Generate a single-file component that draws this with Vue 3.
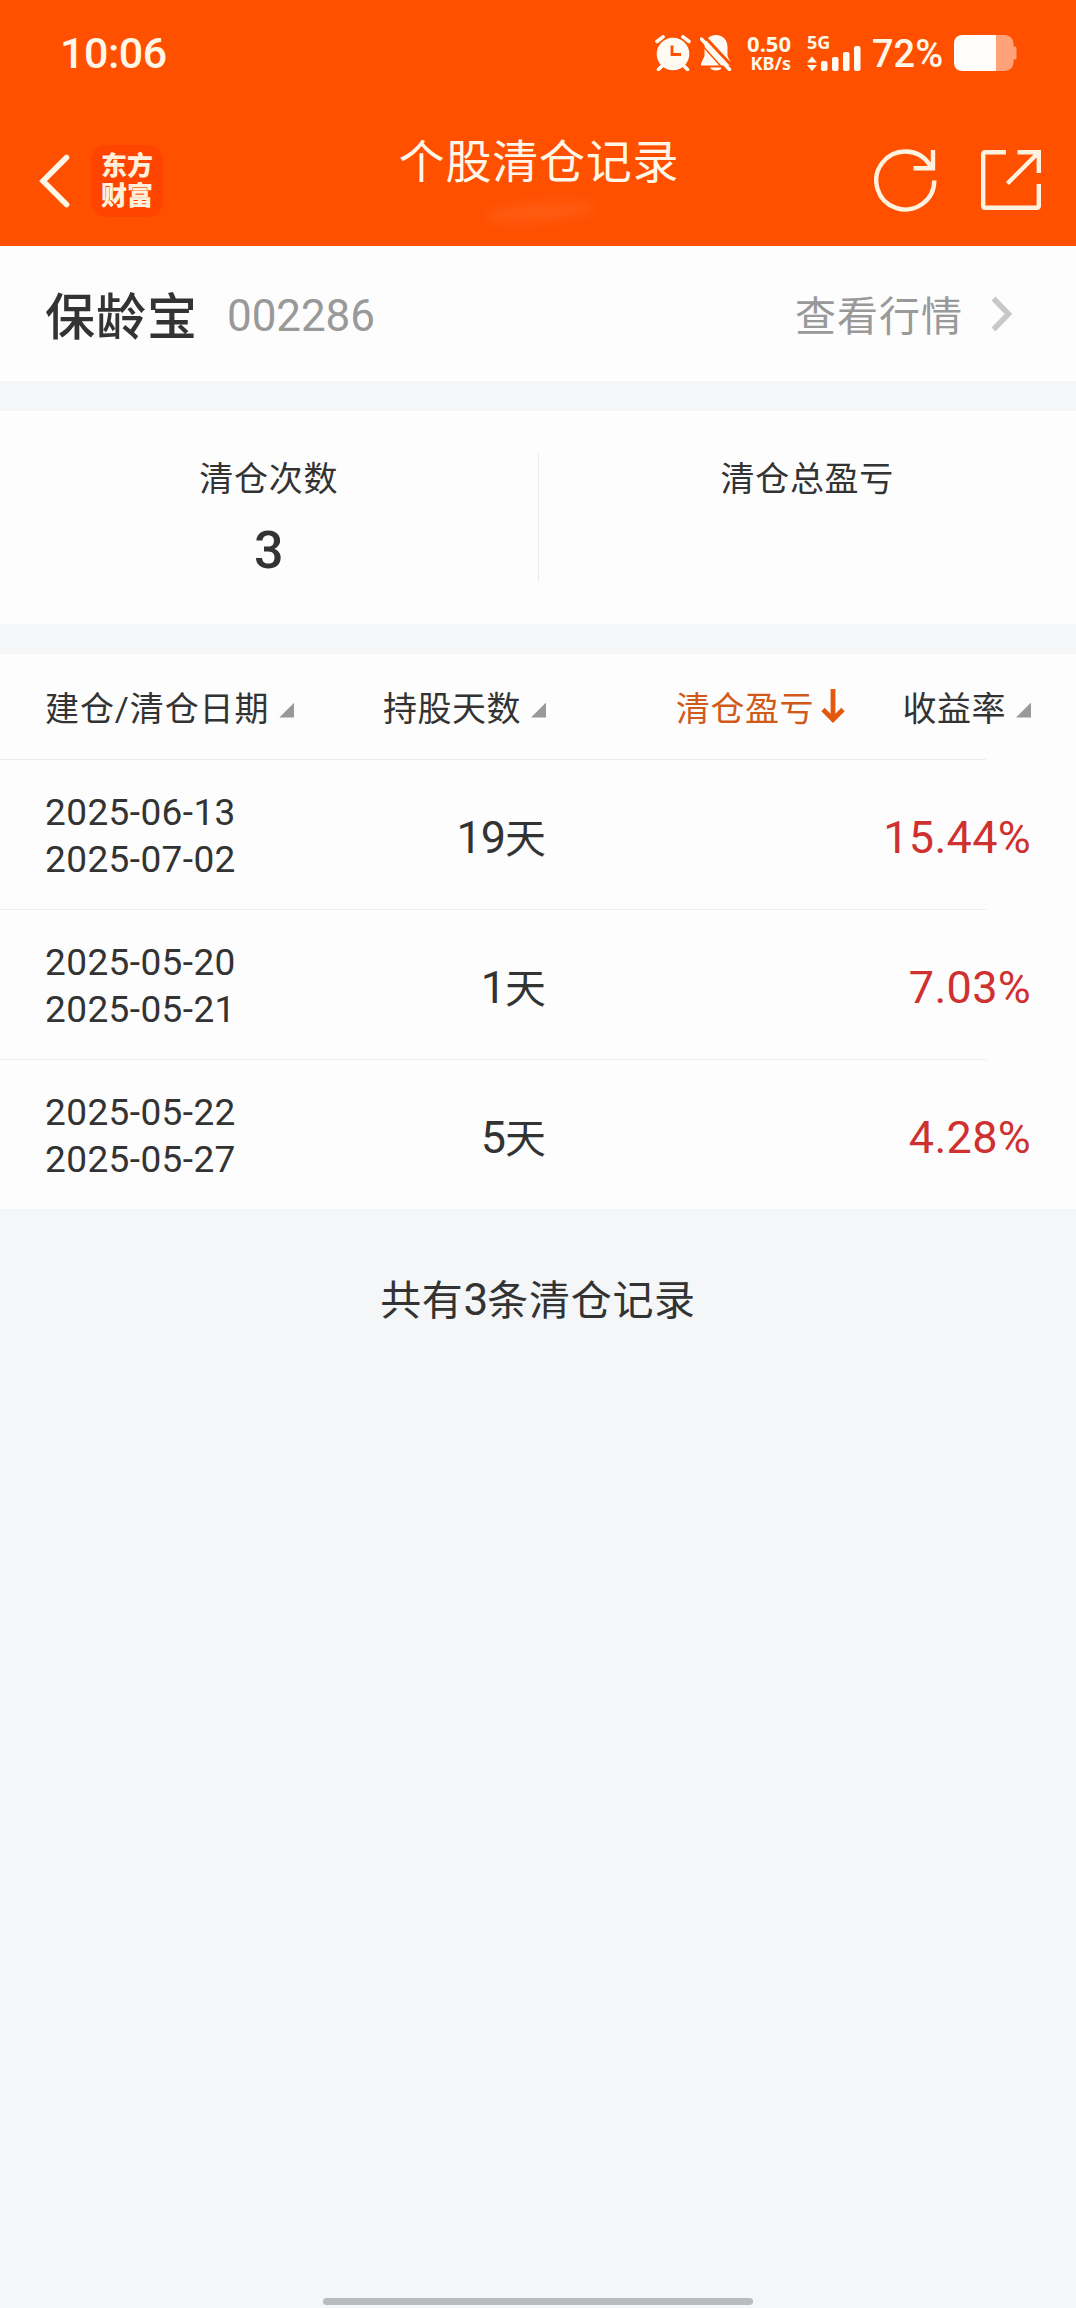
<template>
  <div class="page">
    <!-- 顶部状态栏 + 导航栏 -->
    <header class="top">
      <div class="status-bar">
        <span class="time">10:06</span>
        <div class="status-icons">
          <svg class="alarm" width="36" height="36" viewBox="0 0 36 36">
            <circle cx="18" cy="19" r="16.3" fill="#fffaf2" />
            <path d="M2 6.5 8 1.8M34 6.5 28 1.8M8 30 3.5 34.5M28 30 32.5 34.5" stroke="#fffaf2" stroke-width="3.6" stroke-linecap="round" />
            <path d="M17 10.5V19.5H26" fill="none" stroke="#ff5000" stroke-width="2.8" />
          </svg>
          <svg class="bell" width="32" height="36" viewBox="0 0 32 36">
            <path d="M16 0C9 0 4.5 5 4.5 12V21L1 28.500V30.500H31V28.500L27.500 21V12C27.500 5 23 0 16 0Z" fill="#fffaf2" />
            <path d="M10 32.500H22C20.500 36.500 11.500 36.500 10 32.500Z" fill="#fffaf2" />
            <path d="M4 1 33 32" stroke="#ff5000" stroke-width="3" />
            <path d="M0 8 26 37" stroke="#ff5000" stroke-width="1.5" />
            <path d="M1.500 4 29.500 34.500" stroke="#fffaf2" stroke-width="3.400" stroke-linecap="round" />
          </svg>
          <div class="speed">
            <span class="speed-num">0.50</span>
            <span class="speed-unit">KB/s</span>
          </div>
          <div class="signal">
            <span class="net">5G</span>
            <svg width="54" height="26" viewBox="0 0 54 26">
              <path d="M0 17.500 5 11.500 10 17.500ZM0 20 5 26 10 20Z" fill="#fffaf2" />
              <rect x="14" y="16" width="6.5" height="10" rx="2" fill="#fffaf2" />
              <rect x="25" y="12" width="6.5" height="14" rx="2" fill="#fffaf2" />
              <rect x="36" y="7" width="6.5" height="19" rx="2" fill="#fffaf2" />
              <rect x="47" y="1" width="6.5" height="25" rx="2" fill="#fffaf2" />
            </svg>
          </div>
          <span class="percent">72%</span>
          <svg class="battery" width="63" height="36" viewBox="0 0 63 36">
            <path d="M42 0H50C56 0 59.500 3.500 59.500 9V11.500H61Q62.500 11.500 62.500 13V23Q62.500 24.500 61 24.500H59.500V27C59.500 32.500 56 36 50 36H42Z" fill="#ffa27a" />
            <path d="M9 0H42V36H9C3 36 0 33 0 27V9C0 3 3 0 9 0Z" fill="#fffefd" />
          </svg>
        </div>
      </div>

      <div class="nav-bar">
        <div class="nav-left">
          <svg class="back" width="31" height="54" viewBox="0 0 31 54">
            <path d="M27.500 3.500 4 27 27.500 50.500" fill="none" stroke="#fff7e8" stroke-width="5.600" stroke-linecap="round" />
          </svg>
          <div class="logo">
            <span>东方</span>
            <span>财富</span>
          </div>
        </div>
        <div class="title-box">
          <h1 class="title">个股清仓记录</h1>
          <i class="smudge"></i>
        </div>
        <div class="nav-right">
          <svg width="64" height="64" viewBox="0 0 64 64">
            <path d="M60.300 32.500A29 29 0 1 1 55.500 16.500L58 20" fill="none" stroke="#fff2e0" stroke-width="4.400" />
            <path d="M39.500 20.300H59V2" fill="none" stroke="#fff2e0" stroke-width="4.400" />
          </svg>
          <svg width="62" height="62" viewBox="0 0 62 62">
            <path d="M26 3.200H5.500Q3.200 3.200 3.200 5.500V56.500Q3.200 58.800 5.500 58.800H56.500Q58.800 58.800 58.800 56.500V35M37.500 3.200H58.800V24M58 4 27.500 34.500" fill="none" stroke="#fff2e0" stroke-width="4.400" />
          </svg>
        </div>
      </div>
    </header>

    <!-- 股票信息 -->
    <section class="stock">
      <span class="stock-name">保龄宝</span>
      <span class="stock-code">002286</span>
      <span class="stock-link">查看行情</span>
      <svg width="22" height="36" viewBox="0 0 22 36">
        <path d="M2.500 2.500 17.500 18 2.500 33.500" fill="none" stroke="#c8c8c8" stroke-width="5.400" />
      </svg>
    </section>

    <!-- 汇总 -->
    <section class="summary">
      <div class="summary-item">
        <span class="summary-label">清仓次数</span>
        <span class="summary-value">{{ records.length }}</span>
      </div>
      <div class="summary-item">
        <span class="summary-label">清仓总盈亏</span>
        <span class="summary-value"></span>
      </div>
    </section>

    <!-- 清仓记录列表 -->
    <section class="table">
      <div class="row head">
        <div class="col-date">建仓/清仓日期<i class="tri"></i></div>
        <div class="col-days">持股天数<i class="tri"></i></div>
        <div class="col-profit active">
          清仓盈亏
          <svg width="24" height="34" viewBox="0 0 24 34">
            <path d="M12 0V29M2 20.500 12 30.500 22 20.500" fill="none" stroke="#e2580f" stroke-width="4.800" />
          </svg>
        </div>
        <div class="col-rate">收益率<i class="tri"></i></div>
      </div>
      <div v-for="item in records" :key="item.open" class="row">
        <div class="col-date dates">
          <span>{{ item.open }}</span>
          <span>{{ item.close }}</span>
        </div>
        <div class="col-days days"><span class="num">{{ item.days }}</span>天</div>
        <div class="col-profit"></div>
        <div class="col-rate rate">{{ item.rate }}</div>
      </div>
    </section>

    <p class="total">共有<span class="num">{{ records.length }}</span>条清仓记录</p>

    <div class="home-bar"></div>
  </div>
</template>

<script setup>
import { ref } from 'vue'

const records = ref([
  { open: '2025-06-13', close: '2025-07-02', days: 19, rate: '15.44%' },
  { open: '2025-05-20', close: '2025-05-21', days: 1, rate: '7.03%' },
  { open: '2025-05-22', close: '2025-05-27', days: 5, rate: '4.28%' }
])
</script>

<style>
body {
  margin: 0;
  background: #f4f6f8;
}
</style>

<style scoped>
.page {
  display: flex;
  flex-direction: column;
  width: 1076px;
  height: 2308px;
  overflow: hidden;
  background: #f4f6f8;
  color: #333;
  font-family: Roboto, "Noto Sans CJK SC", sans-serif;
}

.page * {
  box-sizing: border-box;
}

.page svg {
  display: block;
  flex: none;
}

/* 顶部 */
.top {
  height: 246px;
  background: #ff5000;
  color: #fff7e8;
}

.status-bar {
  display: flex;
  justify-content: space-between;
  height: 106px;
  padding: 0 59px 0 60px;
  align-items: center;
}

.time {
  font-size: 43px;
  font-weight: 500;
  line-height: 50px;
  letter-spacing: -0.5px;
}

.status-icons {
  display: flex;
  align-items: center;
}

.bell {
  margin-left: 9px;
}

.speed {
  display: flex;
  flex-direction: column;
  align-items: flex-end;
  width: 46px;
  margin-left: 13px;
  font-family: "Noto Sans", sans-serif;
  font-weight: 700;
  white-space: nowrap;
}

.speed-num {
  font-size: 22px;
  line-height: 20px;
}

.speed-unit {
  font-size: 18px;
  line-height: 20px;
}

.signal {
  display: flex;
  flex-direction: column;
  width: 54px;
  height: 36px;
  margin-left: 16px;
}

.net {
  height: 10px;
  font-family: "Noto Sans", sans-serif;
  font-size: 18px;
  font-weight: 700;
  line-height: 14px;
}

.percent {
  width: 74px;
  margin-left: 11px;
  font-size: 38px;
  font-weight: 500;
  line-height: 44px;
  padding-top: 2px;
}

.battery {
  margin-left: 8px;
}

.nav-bar {
  display: grid;
  grid-template-columns: 1fr auto 1fr;
  height: 140px;
  padding: 0 34px 0 39px;
}

.nav-left {
  display: flex;
  align-items: center;
  height: 149px;
}

.logo {
  display: flex;
  flex-direction: column;
  justify-content: center;
  align-items: center;
  width: 72px;
  height: 72px;
  margin-left: 21px;
  padding-top: 1px;
  border-radius: 15px;
  background: #ff4400;
  color: #fff0dc;
  font-size: 26px;
  font-weight: 900;
  line-height: 30px;
}

.title-box {
  display: flex;
  flex-direction: column;
  align-items: center;
}

.title {
  margin: 22px 0 0;
  font-size: 46px;
  font-weight: 400;
  line-height: 68px;
  letter-spacing: 0.8px;
  margin-right: 3px;
}

.smudge {
  width: 110px;
  height: 18px;
  margin-top: 7px;
  border-radius: 50%;
  background: #ff6322;
  filter: blur(6px);
  opacity: 0.6;
  transform: rotate(-5deg);
}

.nav-right {
  display: flex;
  justify-content: flex-end;
  align-items: center;
  height: 148px;
  gap: 42px;
}

/* 股票信息 */
.stock {
  display: flex;
  align-items: center;
  height: 135px;
  padding: 0 63px 0 45px;
  background: #fdfdfd;
}

.stock-name {
  margin-top: -2px;
  font-size: 50px;
  font-weight: 500;
  letter-spacing: 1px;
}

.stock-code {
  margin-top: 5px;
  margin-left: 29px;
  color: #999;
  font-size: 44px;
  letter-spacing: -0.1px;
}

.stock-link {
  margin-top: -2px;
  margin-left: auto;
  margin-right: 28px;
  color: #999;
  font-size: 41px;
  letter-spacing: 1px;
}

/* 汇总 */
.summary {
  display: flex;
  align-items: center;
  height: 213px;
  margin-top: 30px;
  background: #fdfdfd;
}

.summary-item {
  display: flex;
  flex: 1;
  flex-direction: column;
  align-items: center;
  height: 129px;
}

.summary-item + .summary-item {
  border-left: 1px solid #ebebeb;
}

.summary-label {
  padding-top: 1px;
  font-size: 34px;
  line-height: 50px;
  letter-spacing: 0.7px;
}

.summary-value {
  margin-top: 16px;
  font-size: 52px;
  font-weight: 500;
  line-height: 62px;
}

/* 列表 */
.table {
  margin-top: 30px;
  background: #fdfdfd;
}

.row {
  display: grid;
  grid-template-columns: 310px 191px 299px 186px;
  align-items: center;
  height: 150px;
  padding-left: 45px;
  background: linear-gradient(#ececee, #ececee) left bottom / 986px 1px no-repeat;
}

.row:last-child {
  height: 149px;
  background: none;
}

.head {
  height: 106px;
  padding-bottom: 2px;
  font-size: 34px;
}

.head > div {
  display: flex;
  align-items: center;
  letter-spacing: 0.5px;
  white-space: nowrap;
}

.head .col-date {
  letter-spacing: 0.9px;
}

.head .col-days,
.head .col-profit,
.head .col-rate {
  justify-content: flex-end;
}

.tri {
  width: 15px;
  height: 15px;
  margin-top: 8px;
  margin-left: 10px;
  background: #999;
  clip-path: polygon(100% 0, 100% 100%, 0 100%);
}

.active {
  color: #d05a1a;
}

.active svg {
  margin-left: 7px;
}

.dates {
  display: flex;
  flex-direction: column;
  padding-top: 2px;
  font-size: 37px;
  line-height: 47px;
  letter-spacing: 0.4px;
}

.days {
  font-size: 41px;
  text-align: right;
}

.num {
  font-size: 45px;
  letter-spacing: -1px;
}

.rate {
  padding-top: 5px;
  color: #cf3130;
  font-size: 45px;
  letter-spacing: 0.3px;
  text-align: right;
}

.total {
  margin: 61px 0 0;
  font-size: 41px;
  line-height: 60px;
  letter-spacing: 0.7px;
  text-align: center;
}

.total .num {
  font-size: 44px;
  letter-spacing: -1px;
}

.home-bar {
  width: 430px;
  height: 7px;
  margin: auto auto 3px;
  border-radius: 4px;
  background: #b9bbbc;
}
</style>
